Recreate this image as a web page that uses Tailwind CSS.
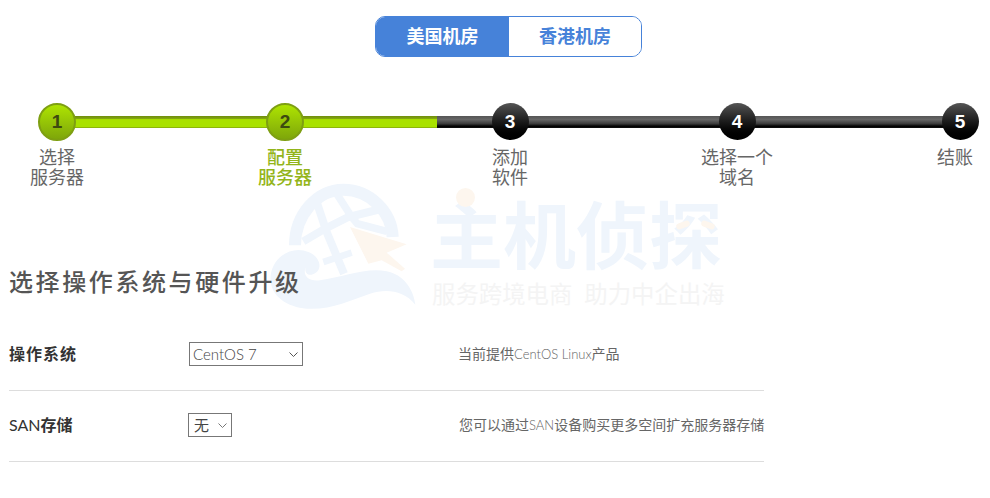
<!DOCTYPE html>
<html lang="zh-CN">
<head>
  <meta charset="UTF-8">
  <title>选择操作系统与硬件升级</title>
  <script src="https://cdn.jsdelivr.net/npm/@tailwindcss/browser@4"></script>
</head>
<body class="bg-white text-[#555] font-['Lato','Noto_Sans_CJK_SC',sans-serif] w-[990px] h-[498px] overflow-hidden relative">
  <!-- 水印 -->
  <div class="absolute left-[270px] top-[182px] w-[460px] h-[135px]">
    <svg class="absolute left-0 top-0" width="160" height="135" viewBox="0 0 480 405" fill="none">
      <g stroke="#eff5fc">
        <path d="M75 190 C75 100 140 23 220 23 C300 23 365 90 368 165" stroke-width="36"/>
        <path d="M100 178 L165 140 L235 105 L345 78" stroke-width="24"/>
        <path d="M140 60 L170 150 L222 275" stroke-width="24"/>
        <path d="M200 35 L245 105 L262 125 L350 148" stroke-width="22"/>
        <path d="M160 240 L245 212" stroke-width="20"/>
      </g>
      <path d="M240 135 L410 187 L350 212 L405 260 L395 268 L335 235 L295 245 Z" fill="#fdf6ee"/>
      <path d="M2 280 C10 220 70 190 115 210 C155 225 160 270 125 278 C110 282 100 265 110 250 C95 275 110 300 150 295 C220 285 290 255 350 268 C400 278 430 320 436 368 C400 325 350 320 300 335 C240 355 180 385 110 380 C50 375 -5 340 2 280 Z" fill="#eff5fc"/>
    </svg>
    <div class="absolute left-[160px] top-[11px] w-[300px] text-[73px] leading-[84px] font-bold text-[#eff5fc] whitespace-nowrap">主机侦探</div>
    <div class="absolute left-[186px] top-[6px] w-[19px] h-[19px] rounded-full bg-[#fdf6ee]"></div>
    <div class="absolute left-[406px] top-[40px] w-[14px] h-[6px] rounded-full bg-[#fdf6ee] -rotate-[20deg]"></div>
    <div class="absolute left-[431px] top-[40px] w-[14px] h-[6px] rounded-full bg-[#fdf6ee] rotate-[20deg]"></div>
    <div class="absolute left-[162px] top-[98px] text-[23.4px] leading-[28px] text-[#f4f4f4] whitespace-nowrap [word-spacing:6px]">服务跨境电商 助力中企出海</div>
  </div>

  <div class="relative">
    <!-- 机房切换 -->
    <div class="pt-4 pl-[375px]">
      <div class="flex w-[267px] h-[41px] rounded-[10px] border border-[#4682d9] overflow-hidden text-[18px] font-bold">
        <div class="w-[133px] bg-[#4682d9] text-white flex items-center justify-center">美国机房</div>
        <div class="flex-1 bg-white text-[#4682d9] flex items-center justify-center">香港机房</div>
      </div>
    </div>

    <!-- 步骤条 -->
    <div class="relative mt-[46px] h-[88px]">
      <div class="absolute left-[57px] top-[13px] w-[380px] h-[12px] bg-[linear-gradient(#6f8f0c_0,#7f9f10_20%,#a9e200_30%,#a9e200_88%,#7f9f10_100%)]"></div>
      <div class="absolute left-[437px] top-[13px] w-[523px] h-[12px] bg-[linear-gradient(#555_0,#666_30%,#3a3a3a_65%,#000_85%,#111_100%)]"></div>
      <div class="relative flex text-[18px] leading-[20px] text-center text-[#666]">
        <div class="w-[60px] ml-[27px] flex flex-col items-center">
          <div class="w-[38px] h-[38px] rounded-full border-2 border-[#7e9f12] bg-gradient-to-b from-[#aee400] to-[#7ea60a] text-[#3d4a10] text-[19px] font-bold font-['Liberation_Sans'] flex items-center justify-center">1</div>
          <div class="mt-[6px] whitespace-nowrap">选择<br>服务器</div>
        </div>
        <div class="w-[60px] ml-[168px] flex flex-col items-center">
          <div class="w-[38px] h-[38px] rounded-full border-2 border-[#7e9f12] bg-gradient-to-b from-[#aee400] to-[#7ea60a] text-[#3d4a10] text-[19px] font-bold font-['Liberation_Sans'] flex items-center justify-center">2</div>
          <div class="mt-[6px] whitespace-nowrap text-[#93b51a] font-medium">配置<br>服务器</div>
        </div>
        <div class="w-[60px] ml-[165px] flex flex-col items-center">
          <div class="w-[37px] h-[37px] mb-px rounded-full bg-gradient-to-b from-[#555] to-black text-white text-[19px] font-bold font-['Liberation_Sans'] flex items-center justify-center">3</div>
          <div class="mt-[6px] whitespace-nowrap">添加<br>软件</div>
        </div>
        <div class="w-[60px] ml-[167px] flex flex-col items-center">
          <div class="w-[37px] h-[37px] mb-px rounded-full bg-gradient-to-b from-[#555] to-black text-white text-[19px] font-bold font-['Liberation_Sans'] flex items-center justify-center">4</div>
          <div class="mt-[6px] whitespace-nowrap">选择一个<br>域名</div>
        </div>
        <div class="w-[60px] ml-[163px] flex flex-col items-center">
          <div class="w-[37px] h-[37px] mb-px rounded-full bg-gradient-to-b from-[#555] to-black text-white text-[19px] font-bold font-['Liberation_Sans'] flex items-center justify-center">5</div>
          <div class="mt-[6px] mr-[10px] whitespace-nowrap">结账</div>
        </div>
      </div>
    </div>

    <!-- 配置表单 -->
    <div class="ml-[9px] w-[755px]">
      <h2 class="mt-[73px] text-[24px] leading-[36px] tracking-[2.6px] font-medium text-[#555]">选择操作系统与硬件升级</h2>
      <div class="flex items-center h-[71px] pb-[3px] border-b border-[#ddd] mt-[20px]">
        <div class="w-[180px] shrink-0 text-[16px] tracking-[1px] font-bold text-[#333]">操作系统</div>
        <div class="relative w-[114px] h-[24px] shrink-0">
          <select class="appearance-none w-full h-full border border-[#777] text-[15px] font-light pl-[3px] text-[#444]"><option>CentOS 7</option></select>
          <svg class="absolute right-[5px] top-[10px]" width="9" height="5" viewBox="0 0 9 5" fill="none"><path d="M0.5 0.5 L4.5 4.5 L8.5 0.5" stroke="#555"/></svg>
        </div>
        <div class="ml-[155px] text-[14px] text-[#666] whitespace-nowrap">当前提供<span class="text-[13px] font-light">CentOS Linux</span>产品</div>
      </div>
      <div class="flex items-center h-[71px] pb-[3px] border-b border-[#ddd]">
        <div class="w-[179px] shrink-0 text-[16px] font-bold text-[#333]"><span class="font-normal">SAN</span>存储</div>
        <div class="relative w-[44px] h-[24px] shrink-0">
          <select class="appearance-none w-full h-full border border-[#777] text-[15px] pl-[5px] text-[#444]"><option>无</option></select>
          <svg class="absolute right-[5px] top-[10px]" width="9" height="5" viewBox="0 0 9 5" fill="none"><path d="M0.5 0.5 L4.5 4.5 L8.5 0.5" stroke="#777"/></svg>
        </div>
        <div class="ml-[227px] text-[14px] text-[#666] whitespace-nowrap">您可以通过<span class="text-[13px] font-light">SAN</span>设备购买更多空间扩充服务器存储</div>
      </div>
    </div>
  </div>
</body>
</html>
